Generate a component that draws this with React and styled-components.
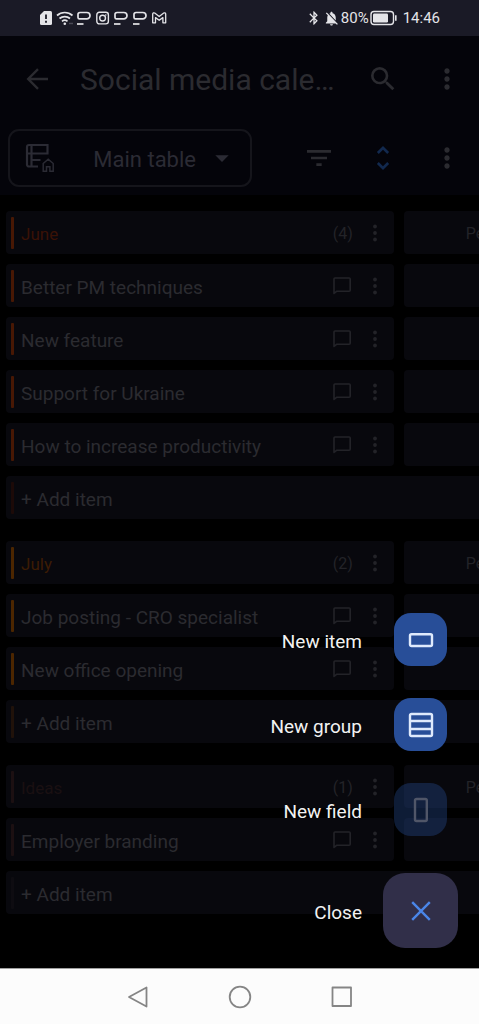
import React from 'react';
import styled, { createGlobalStyle } from 'styled-components';
import {
  MdSearch,
  MdMoreVert,
  MdFilterList,
  MdUnfoldMore,
  MdArrowDropDown,
  MdBluetooth,
  MdNotificationsOff,
} from 'react-icons/md';

const GlobalStyle = createGlobalStyle`
  * {
    box-sizing: border-box;
  }

  body {
    margin: 0;
    background: #000;
    font-family: Roboto, 'Noto Sans', sans-serif;
  }

  button {
    border: none;
    padding: 0;
    background: none;
    color: inherit;
    font: inherit;
    cursor: pointer;
  }

  svg {
    display: block;
    flex-shrink: 0;
  }
`;

const Screen = styled.div`
  display: flex;
  flex-direction: column;
  min-height: 100vh;
  overflow: hidden;
`;

const StatusBar = styled.div`
  display: flex;
  justify-content: space-between;
  align-items: center;
  height: 36px;
  padding: 0 39px;
  background: #1a1a26;
  color: #e4e4e8;
  font-size: 15px;
`;

const StatusGroup = styled.div`
  display: flex;
  align-items: center;
  gap: ${(props) => props.$gap}px;
`;

const Clock = styled.span`
  margin-left: 5px;
`;

const Main = styled.main`
  position: relative;
  flex: 1;
`;

const TopArea = styled.header`
  background: #04040a;
  color: #2b2b30;
`;

const TitleBar = styled.div`
  display: flex;
  align-items: center;
  height: 85px;
  padding: 0 16px 0 22px;
`;

const Title = styled.h1`
  flex: 1;
  margin: 0 0 0 26px;
  padding-top: 3px;
  font-size: 30px;
  font-weight: 400;
  line-height: 36px;
  white-space: nowrap;
`;

const Actions = styled.div`
  display: flex;
  gap: 32px;
`;

const IconButton = styled.button`
  display: flex;
  align-items: center;
  justify-content: center;
  color: ${(props) => props.$color || '#2b2b30'};
`;

const ToolBar = styled.div`
  display: flex;
  align-items: center;
  justify-content: space-between;
  padding: 8px 16px 8px 8px;
`;

const TableSelect = styled.button`
  display: flex;
  align-items: center;
  width: 244px;
  height: 58px;
  padding: 0 12px 0 15px;
  border: 2px solid #15151b;
  border-radius: 11px;
  color: #2b2b34;
  font-size: 22px;
`;

const TableName = styled.span`
  flex: 1;
  padding-top: 3px;
  text-align: right;
  margin-right: 10px;
`;

const Board = styled.div`
  display: flex;
  flex-direction: column;
  gap: 22px;
  padding: 16px 0 40px 6px;
`;

const Group = styled.section`
  display: flex;
  flex-direction: column;
  gap: 10px;
`;

const Row = styled.div`
  display: grid;
  grid-template-columns: 82% 1fr;
  gap: 10px;
`;

const Card = styled.div`
  display: flex;
  align-items: center;
  height: 43px;
  padding: 0 6px 0 5px;
  border-radius: 4px;
  background: #08080d;
`;

const AddCard = styled(Card).attrs({ as: 'button' })`
  border-radius: 4px 0 0 4px;
  background: #08080d;
  text-align: left;
`;

const Cell = styled.div`
  display: flex;
  align-items: center;
  height: 43px;
  padding: 2px 0 0 62px;
  overflow: hidden;
  border-radius: 4px 0 0 4px;
  background: #08080d;
  color: #232328;
  font-size: 16px;
`;

const ColorBar = styled.span`
  width: 3px;
  height: 32px;
  margin-right: 7px;
  border-radius: 1px;
  background: ${(props) => props.$color};
`;

const GroupName = styled.h2`
  flex: 1;
  margin: 0;
  padding-top: 2px;
  color: ${(props) => props.$color};
  font-size: 17px;
  font-weight: 400;
`;

const ItemName = styled.span`
  flex: 1;
  padding-top: 3px;
  color: #2b2b30;
  font-size: 19px;
  white-space: nowrap;
`;

const Count = styled.span`
  margin-right: 9px;
  padding-top: 2px;
  color: #232328;
  font-size: 16px;
`;

const ChatButton = styled(IconButton)`
  margin-right: 11px;
`;

const Menu = styled.div`
  position: absolute;
  right: 21px;
  bottom: 20px;
  display: flex;
  flex-direction: column;
  gap: 32px;
`;

const MenuItem = styled.button`
  display: grid;
  grid-template-columns: 1fr 75px;
  align-items: center;
  justify-items: center;
  gap: 21px;
  margin-top: ${(props) => (props.$last ? 5 : 0)}px;
`;

const MenuLabel = styled.span`
  justify-self: end;
  padding-top: 3px;
  color: #f2f2f2;
  font-size: 19px;
`;

const Fab = styled.span`
  display: flex;
  align-items: center;
  justify-content: center;
  width: 53px;
  height: 53px;
  border-radius: 17px;
  background: ${(props) => (props.$faded ? 'rgba(39, 78, 150, 0.36)' : '#284e98')};
  color: ${(props) => (props.$faded ? '#505668' : '#dfeafc')};
`;

const CloseFab = styled(Fab)`
  width: 75px;
  height: 75px;
  border-radius: 22px;
  background: #312f49;
  color: #4a86e8;
`;

const NavBar = styled.nav`
  display: flex;
  align-items: center;
  justify-content: center;
  gap: 79px;
  height: 56px;
  border-top: 1px solid #a0a0a0;
  background: #fcfcfc;
`;

const NavButton = styled.button`
  color: #858585;
`;

const SimIcon = () => (
  <svg width="14" height="16" viewBox="0 0 14 16">
    <path d="M5 1h6.500a1.500 1.500 0 0 1 1.500 1.500v11a1.500 1.500 0 0 1-1.500 1.500h-9A1.500 1.500 0 0 1 1 13.500V5z" fill="currentColor" />
    <path d="M7 4.500v4.500M7 10.800v2" stroke="#1a1a26" strokeWidth="1.800" />
  </svg>
);

const WifiIcon = () => (
  <svg width="18" height="16" viewBox="0 0 18 16" fill="none" stroke="currentColor" strokeWidth="1.700">
    <path d="M1 5.500a11.500 11.500 0 0 1 15.500 0M3.500 8.500a8 8 0 0 1 10.500 0M6 11.300a4.500 4.500 0 0 1 5.500 0" />
    <circle cx="8.800" cy="13.700" r="1.300" fill="currentColor" stroke="none" />
    <path d="M13 13.500h4" stroke="#4a4a55" strokeWidth="1.500" />
  </svg>
);

const ParkIcon = () => (
  <svg width="16" height="16" viewBox="0 0 16 16" fill="none" stroke="currentColor" strokeWidth="1.700">
    <path d="M1 7.500V4.500a2 2 0 0 1 2-2h6.800a3.200 3.200 0 0 1 0 6.400H2.500A1.500 1.500 0 0 1 1 7.500z" />
    <path d="M0 14h6.500" />
  </svg>
);

const InstagramIcon = () => (
  <svg width="15" height="16" viewBox="0 0 15 16" fill="none" stroke="currentColor" strokeWidth="1.400">
    <rect x="0.800" y="2.300" width="11.600" height="11.600" rx="2.600" />
    <circle cx="6.600" cy="8.100" r="2.900" />
    <circle cx="9.800" cy="5" r="0.800" fill="currentColor" stroke="none" />
  </svg>
);

const MailIcon = () => (
  <svg width="15" height="16" viewBox="0 0 15 16" fill="none" stroke="currentColor" strokeWidth="1.300" strokeLinejoin="round">
    <path d="M0.700 12.800V4c0-1.100 1.200-1.500 2-.9l4.500 3.500L11.700 3.100c.8-.6 2-.2 2 .9v8.800h-2.800V7.600L7.200 10.300 3.500 7.600V12.800z" />
  </svg>
);

const BatteryIcon = () => (
  <svg width="27" height="16" viewBox="0 0 27 16">
    <rect x="1" y="1.500" width="22.500" height="13" rx="3" fill="none" stroke="currentColor" strokeWidth="1.400" />
    <rect x="3" y="3.500" width="15" height="9" rx="1.200" fill="currentColor" />
    <path d="M25.800 5.200v5.600" stroke="currentColor" strokeWidth="1.600" />
  </svg>
);

const BackIcon = () => (
  <svg width="32" height="32" viewBox="0 0 32 32" fill="none" stroke="currentColor" strokeWidth="2.400">
    <path d="M26 16H7M16 6.200L6.200 16l9.800 9.800" />
  </svg>
);

const TableIcon = () => (
  <svg width="30" height="30" viewBox="0 0 30 30" fill="none" stroke="currentColor" strokeWidth="2.200">
    <path d="M13 23.500H4a2 2 0 0 1-2-2V4a2 2 0 0 1 2-2h18.500v8.500H2M6.500 2v21.500M6.500 17H15.500" />
    <path d="M18.200 20.500l5-4.300 5 4.300v7.700h-3.300v-4.400h-3.400v4.400h-3.300z" strokeWidth="1.500" />
  </svg>
);

const ChatIcon = () => (
  <svg width="18" height="18" viewBox="0 0 18 18" fill="none" stroke="currentColor" strokeWidth="1.600" strokeLinejoin="round">
    <path d="M1 16.500V2a1 1 0 0 1 1-1h14.200a1 1 0 0 1 1 1v11.300a1 1 0 0 1-1 1H3.500z" />
  </svg>
);

const DotsIcon = () => (
  <svg width="26" height="26" viewBox="0 0 26 26" fill="currentColor">
    <circle cx="13" cy="6.500" r="1.900" />
    <circle cx="13" cy="13" r="1.900" />
    <circle cx="13" cy="19.500" r="1.900" />
  </svg>
);

const ItemIcon = () => (
  <svg width="26" height="26" viewBox="0 0 26 26" fill="none" stroke="currentColor" strokeWidth="2.400">
    <rect x="2" y="7.200" width="22" height="11.800" rx="1.500" />
  </svg>
);

const GroupIcon = () => (
  <svg width="26" height="26" viewBox="0 0 26 26" fill="none" stroke="currentColor" strokeWidth="2.400">
    <rect x="2" y="2" width="22" height="22" rx="1.500" />
    <path d="M2 9h22M2 17h22" />
  </svg>
);

const FieldIcon = () => (
  <svg width="26" height="26" viewBox="0 0 26 26" fill="none" stroke="currentColor" strokeWidth="2.400">
    <rect x="7" y="2" width="11.800" height="22" rx="1.500" />
  </svg>
);

const CloseIcon = () => (
  <svg width="20" height="20" viewBox="0 0 20 20" fill="none" stroke="currentColor" strokeWidth="2.400">
    <path d="M1.200 1.200l17.600 17.600M18.800 1.200L1.200 18.800" />
  </svg>
);

const groups = [
  {
    name: 'June',
    text: '#3a1206',
    bar: '#481804',
    addBar: '#1c0a08',
    items: ['Better PM techniques', 'New feature', 'Support for Ukraine', 'How to increase productivity'],
  },
  {
    name: 'July',
    text: '#3c1c04',
    bar: '#4c2600',
    addBar: '#20120a',
    items: ['Job posting - CRO specialist', 'New office opening'],
  },
  {
    name: 'Ideas',
    text: '#1a1012',
    bar: '#1c1012',
    addBar: '#0e0c11',
    items: ['Employer branding'],
  },
];

const menuItems = [
  { label: 'New item', icon: <ItemIcon /> },
  { label: 'New group', icon: <GroupIcon /> },
  { label: 'New field', icon: <FieldIcon />, faded: true },
];

function BoardGroup({ group }) {
  return (
    <Group>
      <Row>
        <Card>
          <ColorBar $color={group.bar} />
          <GroupName $color={group.text}>{group.name}</GroupName>
          <Count>({group.items.length})</Count>
          <IconButton $color="#232328" aria-label="Group options">
            <DotsIcon />
          </IconButton>
        </Card>
        <Cell>Person</Cell>
      </Row>
      {group.items.map((item) => (
        <Row key={item}>
          <Card>
            <ColorBar $color={group.bar} />
            <ItemName>{item}</ItemName>
            <ChatButton $color="#232328" aria-label="Updates">
              <ChatIcon />
            </ChatButton>
            <IconButton $color="#232328" aria-label="Item options">
              <DotsIcon />
            </IconButton>
          </Card>
          <Cell />
        </Row>
      ))}
      <AddCard>
        <ColorBar $color={group.addBar} />
        <ItemName>+ Add item</ItemName>
      </AddCard>
    </Group>
  );
}

function App() {
  return (
    <Screen>
      <GlobalStyle />
      <StatusBar>
        <StatusGroup $gap={3}>
          <SimIcon />
          <WifiIcon />
          <ParkIcon />
          <InstagramIcon />
          <ParkIcon />
          <ParkIcon />
          <MailIcon />
        </StatusGroup>
        <StatusGroup $gap={1}>
          <MdBluetooth size={16} />
          <MdNotificationsOff size={17} />
          <span>80%</span>
          <BatteryIcon />
          <Clock>14:46</Clock>
        </StatusGroup>
      </StatusBar>

      <Main>
        <TopArea>
          <TitleBar>
            <IconButton aria-label="Back">
              <BackIcon />
            </IconButton>
            <Title>Social media cale…</Title>
            <Actions>
              <IconButton aria-label="Search">
                <MdSearch size={32} />
              </IconButton>
              <IconButton aria-label="Board options">
                <MdMoreVert size={32} />
              </IconButton>
            </Actions>
          </TitleBar>
          <ToolBar>
            <TableSelect>
              <TableIcon />
              <TableName>Main table</TableName>
              <MdArrowDropDown size={32} />
            </TableSelect>
            <Actions>
              <IconButton aria-label="Filter">
                <MdFilterList size={32} />
              </IconButton>
              <IconButton $color="#12294e" aria-label="Expand">
                <MdUnfoldMore size={32} />
              </IconButton>
              <IconButton aria-label="Table options">
                <MdMoreVert size={32} />
              </IconButton>
            </Actions>
          </ToolBar>
        </TopArea>

        <Board>
          {groups.map((group) => (
            <BoardGroup key={group.name} group={group} />
          ))}
        </Board>

        <Menu>
          {menuItems.map((item) => (
            <MenuItem key={item.label}>
              <MenuLabel>{item.label}</MenuLabel>
              <Fab $faded={item.faded}>{item.icon}</Fab>
            </MenuItem>
          ))}
          <MenuItem $last>
            <MenuLabel>Close</MenuLabel>
            <CloseFab>
              <CloseIcon />
            </CloseFab>
          </MenuItem>
        </Menu>
      </Main>

      <NavBar>
        <NavButton aria-label="Back">
          <svg width="22" height="24" viewBox="0 0 22 24" fill="none" stroke="currentColor" strokeWidth="1.800" strokeLinejoin="round">
            <path d="M19.500 2.500v19L2 12z" />
          </svg>
        </NavButton>
        <NavButton aria-label="Home">
          <svg width="24" height="24" viewBox="0 0 24 24" fill="none" stroke="currentColor" strokeWidth="1.800">
            <circle cx="12" cy="12" r="10.300" />
          </svg>
        </NavButton>
        <NavButton aria-label="Recent apps">
          <svg width="22" height="24" viewBox="0 0 22 24" fill="none" stroke="currentColor" strokeWidth="1.800" strokeLinejoin="round">
            <rect x="1.500" y="2.500" width="18.500" height="18.500" />
          </svg>
        </NavButton>
      </NavBar>
    </Screen>
  );
}

export default App;
